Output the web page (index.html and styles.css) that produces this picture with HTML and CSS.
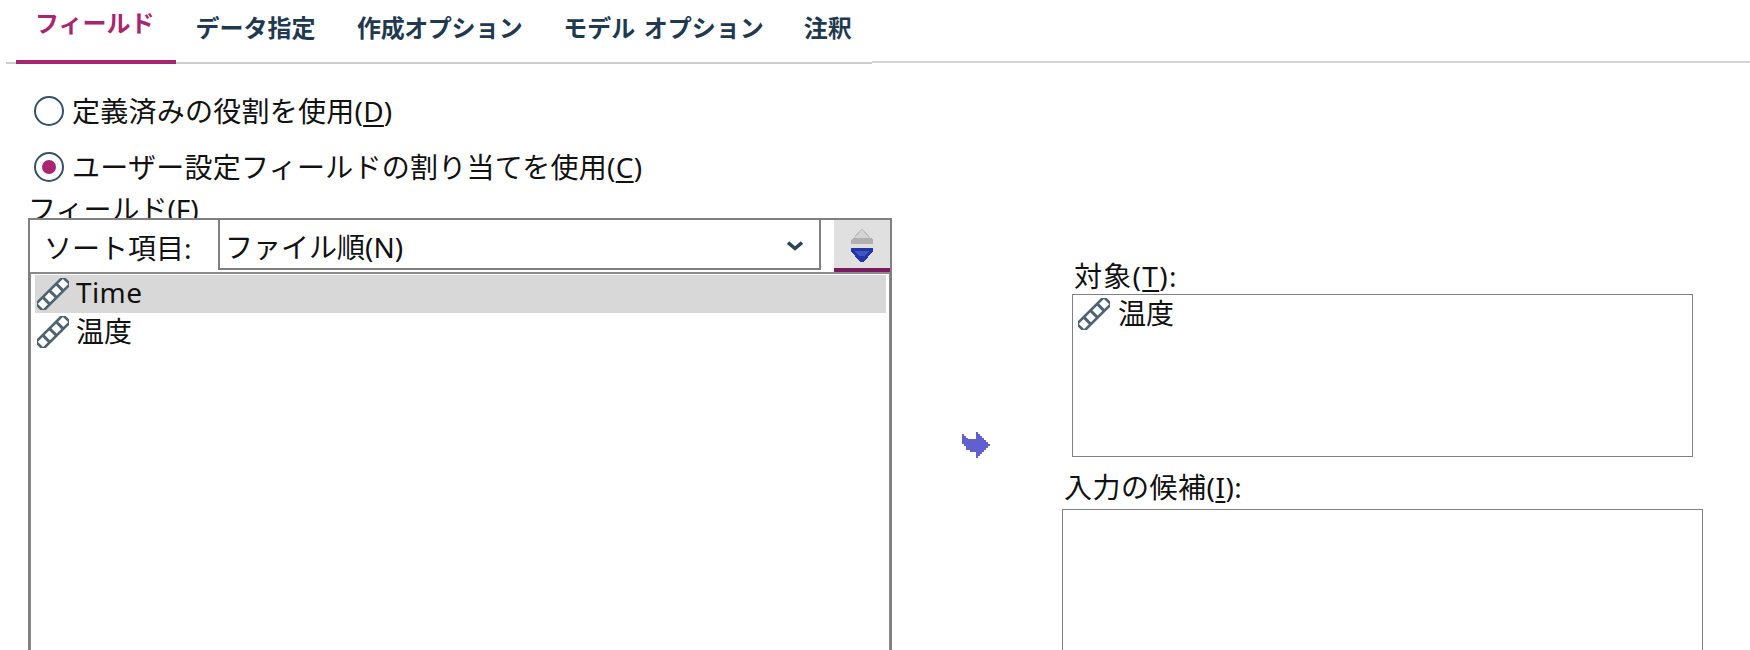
FILE: index.html
```html
<!DOCTYPE html>
<html lang="ja">
<head>
<meta charset="utf-8">
<title>フィールド</title>
<link rel="stylesheet" href="styles.css">
</head>
<body>
<svg class="defs" width="0" height="0" aria-hidden="true">
  <defs>
    <symbol id="ruler" viewBox="0 0 32 32">
      <g transform="rotate(-45 16 16)">
        <rect x="-3" y="11" width="38" height="10" rx="1" fill="#fff" stroke="#4d6273" stroke-width="2.6"/>
        <path d="M6.5 11v10M16 11v10M25.5 11v10" stroke="#4d6273" stroke-width="3" fill="none"/>
      </g>
    </symbol>
  </defs>
</svg>
<header class="tabs">
  <nav class="tab-strip">
    <a class="tab tab-active">フィールド</a>
    <a class="tab tab-data">データ指定</a>
    <a class="tab tab-build">作成オプション</a>
    <a class="tab tab-model">モデル オプション</a>
    <a class="tab">注釈</a>
  </nav>
  <div class="tab-rest"></div>
</header>
<main class="content">
  <section class="left">
    <label class="radio-row row-first"><span class="radio"></span><span>定義済みの役割を使用(<u>D</u>)</span></label>
    <label class="radio-row row-second"><span class="radio radio-on"></span><span>ユーザー設定フィールドの割り当てを使用(<u>C</u>)</span></label>
    <div class="fields-label">フィールド(F)</div>
    <div class="fields-panel">
      <div class="sort-bar">
        <span class="sort-label">ソート項目:</span>
        <div class="select">
          <span>ファイル順(N)</span>
          <svg class="chevron" width="16" height="10" viewBox="0 0 16 10"><path d="M1 1.5 8 7.5l7-6" fill="none" stroke="#2b4558" stroke-width="3.6"/></svg>
        </div>
        <button class="sort-btn" type="button" aria-label="sort">
          <svg width="22" height="33" viewBox="0 0 22 33" shape-rendering="crispEdges">
            <path d="M11 0 20 10H2Z" fill="#d4d4d4" stroke="#bdbdbd"/>
            <path d="M2 9h18l2 2v4H0v-4z" fill="#b0b0b0"/>
            <path d="M0 19h22v3l-9 11h-4L0 22z" fill="#2236a8"/>
            <path d="M4 22h14l-4 5H8z" fill="#4257bd"/>
          </svg>
        </button>
      </div>
      <ul class="list">
        <li class="item item-selected"><svg class="ruler"><use href="#ruler"/></svg><span class="latin">Time</span></li>
        <li class="item"><svg class="ruler"><use href="#ruler"/></svg>温度</li>
      </ul>
    </div>
  </section>
  <div class="arrow-col">
    <svg width="28" height="26" viewBox="0 0 28 26" shape-rendering="crispEdges"><path d="M0 2 2 2 2 4 4 4 4 6 6 6 6 7 14 7 14 0 16 0 16 2 18 2 18 4 20 4 20 6 22 6 22 8 24 8 24 10 26 10 26 12 28 12 28 14 26 14 26 16 24 16 24 18 22 18 22 20 20 20 20 22 18 22 18 24 16 24 16 26 14 26 14 20 8 20 8 18 4 18 4 14 2 14 2 12 0 12Z" fill="#6060d0"/></svg>
  </div>
  <section class="right">
    <div class="target-label">対象(<u>T</u>):</div>
    <div class="target-box">
      <div class="item item-target"><svg class="ruler"><use href="#ruler"/></svg>温度</div>
    </div>
    <div class="input-label">入力の候補(<u>I</u>):</div>
    <div class="input-box"></div>
  </section>
</main>
</body>
</html>
```
FILE: styles.css
```css
html, body {
  margin: 0;
  height: 650px;
  overflow: hidden;
  background: #fff;
}
body {
  font-family: "Noto Sans", "Noto Sans CJK JP", sans-serif;
  font-size: 28px;
  color: #111;
}
.defs { position: absolute; }
u { text-underline-offset: 3px; }

.tabs {
  display: flex;
  align-items: flex-start;
  height: 64px;
}
.tab-strip {
  display: flex;
  align-items: flex-start;
  flex: none;
  width: 856px;
  height: 62px;
  margin-left: 6px;
  padding-left: 10px;
  border-bottom: 2px solid #cdcdcd;
  font-family: "Noto Sans CJK JP", sans-serif;
  font-size: 24px;
  font-weight: 700;
  color: #1f3a50;
}
.tab-rest {
  flex: 1;
  height: 61px;
  border-bottom: 2px solid #d4d4d4;
}
.tab {
  display: flex;
  align-items: center;
  box-sizing: border-box;
  height: 62px;
  padding: 0 21px 8px;
  line-height: 1;
  white-space: pre;
}
.tab-data { padding-left: 20px; padding-right: 20.5px; }
.tab-build { letter-spacing: -0.4px; padding-right: 20px; }
.tab-model { word-spacing: 3px; padding-right: 19px; }
.tab-active {
  height: 64px;
  padding: 0 21px 16px 19px;
  color: #a8266f;
  border-bottom: 4px solid #a8266f;
}

.content {
  display: flex;
  align-items: flex-start;
}
.left {
  width: 892px;
  padding-left: 28px;
  box-sizing: border-box;
  flex: none;
}
.radio-row {
  display: flex;
  align-items: center;
  height: 30px;
  margin-left: 6px;
  gap: 8px;
  line-height: 30px;
  letter-spacing: 0.25px;
  white-space: nowrap;
}
.row-first { margin-top: 32px; }
.row-second { margin-top: 26px; }
.radio {
  flex: none;
  width: 30px;
  height: 30px;
  box-sizing: border-box;
  border: 2px solid #35506a;
  border-radius: 50%;
  background: #fff;
  display: flex;
  align-items: center;
  justify-content: center;
}
.radio-on::after {
  content: "";
  width: 14px;
  height: 14px;
  border-radius: 50%;
  background: #a8266f;
}
.fields-label {
  height: 36px;
  line-height: 54px;
  white-space: nowrap;
}
.fields-panel {
  position: relative;
  background: #fff;
  border: 2px solid #808080;
  border-bottom: 0;
  height: 440px;
  display: flex;
  flex-direction: column;
}
.sort-bar {
  display: flex;
  align-items: flex-start;
  height: 52px;
  flex: none;
  border-bottom: 2px solid #8a8a8a;
}
.sort-label {
  width: 188px;
  box-sizing: border-box;
  padding: 3px 0 0 14px;
  line-height: 50px;
  flex: none;
  white-space: nowrap;
}
.select {
  width: 603px;
  height: 50px;
  flex: none;
  box-sizing: border-box;
  border-left: 2px solid #808080;
  border-right: 2px solid #808080;
  border-bottom: 2px solid #808080;
  display: flex;
  align-items: center;
  justify-content: space-between;
  padding: 3px 16px 0 5px;
  white-space: nowrap;
}
.sort-btn {
  width: 56px;
  height: 52px;
  margin-left: 13px;
  flex: none;
  padding: 9px 0 0;
  border: 0;
  border-bottom: 4px solid #7b1a5e;
  background: #e0e0e0;
  box-sizing: border-box;
  display: flex;
  justify-content: center;
  align-items: flex-start;
}
.list {
  list-style: none;
  flex: 1;
  margin: 0;
  padding: 1px 3px 0 4px;
  box-sizing: border-box;
  border-left: 1px solid #8a8a8a;
  border-right: 1px solid #8a8a8a;
}
.item {
  display: flex;
  align-items: center;
  height: 38px;
  gap: 7px;
  padding: 0 0 4px 2px;
  box-sizing: border-box;
  white-space: nowrap;
}
.latin { letter-spacing: 0.4px; }
.item-selected { background: #d8d8d8; }
.ruler {
  width: 32px;
  height: 32px;
  flex: none;
  margin-top: 4px;
}
.arrow-col {
  flex: none;
  width: 28px;
  margin-left: 70px;
  padding-top: 364px;
}
.right {
  flex: none;
  margin-left: 82px;
}
.target-label {
  margin-left: 2px;
  margin-top: 195px;
  height: 35px;
  line-height: 34px;
  letter-spacing: 1.3px;
}
.target-box {
  width: 621px;
  height: 163px;
  box-sizing: border-box;
  border: 1px solid #808080;
  padding: 0 0 0 5px;
}
.item-target { padding-left: 0; gap: 8px; }
.input-label {
  margin-left: -8px;
  margin-top: 16px;
  height: 36px;
  line-height: 28px;
  letter-spacing: 0.5px;
}
.input-box {
  width: 641px;
  height: 300px;
  margin-left: -10px;
  box-sizing: border-box;
  border: 1px solid #808080;
}
```
